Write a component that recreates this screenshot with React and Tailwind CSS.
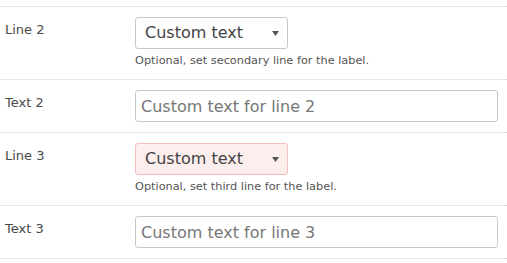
import React from 'react';

const font = { fontFamily: '"DejaVu Sans", Verdana, sans-serif' };

const SelectField = ({ value, error = false, help }) => (
  <div className="flex flex-col">
    <div className="relative w-[153px]">
      <select
        defaultValue={value}
        style={font}
        className={`w-full h-[32px] appearance-none rounded-[3px] border pl-[9px] pr-6 text-[16px] text-[#444] outline-none ${
          error ? 'bg-[#fdeeee] border-[#f5bcbc]' : 'bg-white border-[#c8c8c8]'
        }`}
      >
        <option>{value}</option>
      </select>
      <svg className="absolute right-[9px] top-[14px] pointer-events-none" width="7" height="5" viewBox="0 0 7 5">
        <path d="M0 0h7L3.5 5z" fill="#555" />
      </svg>
    </div>
    <p className="mt-[4px] text-[11.3px] leading-4 text-[#555]">{help}</p>
  </div>
);

const TextField = ({ placeholder }) => (
  <input
    type="text"
    placeholder={placeholder}
    style={font}
    className="w-[363px] h-[32px] rounded-[3px] border border-[#c8c8c8] bg-white px-[5px] text-[16px] text-[#444] placeholder:text-[#777] outline-none"
  />
);

const Row = ({ label, children }) => (
  <div className="flex border-b border-dotted border-[#d4d4d4] pt-[10px] pb-[10px]">
    <div className="w-[135px] shrink-0 pl-[5px] pt-[3px] text-[13px] leading-5 text-[#4a4a4a]">{label}</div>
    <div>{children}</div>
  </div>
);

export default function App() {
  return (
    <div className="w-[507px] h-[263px] bg-white overflow-hidden" style={font}>
      <div className="h-[6px] border-b border-dotted border-[#d4d4d4] box-content" />
      <Row label="Line 2">
        <SelectField value="Custom text" help="Optional, set secondary line for the label." />
      </Row>
      <Row label="Text 2">
        <TextField placeholder="Custom text for line 2" />
      </Row>
      <Row label="Line 3">
        <SelectField value="Custom text" error help="Optional, set third line for the label." />
      </Row>
      <Row label="Text 3">
        <TextField placeholder="Custom text for line 3" />
      </Row>
    </div>
  );
}
